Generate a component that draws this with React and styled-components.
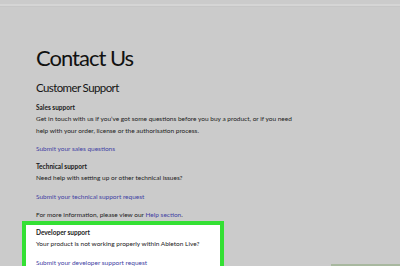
import React from "react";
import styled, { createGlobalStyle } from "styled-components";

const Global = createGlobalStyle`
  html, body { margin: 0; padding: 0; }
  body {
    width: 400px;
    height: 266px;
    overflow: hidden;
    background: #cbcbcb;
    font-family: Lato, "Open Sans", sans-serif;
    color: #141414;
  }
`;

const Page = styled.div`
  position: relative;
  width: 400px;
  height: 266px;
  overflow: hidden;
  background: #cbcbcb;
`;

const TopRule = styled.div`
  margin-top: 4px;
  height: 2px;
  background: #d5d5d5;
  border-bottom: 1px solid #c6c6c6;
`;

const Content = styled.div`
  padding: 0 0 0 36px;
`;

const Title = styled.h1`
  margin: 38px 0 0;
  font-size: 22px;
  line-height: 26px;
  font-weight: 400;
  letter-spacing: -1px;
  color: #111;
`;

const SubTitle = styled.h2`
  margin: 10px 0 0;
  font-size: 11.5px;
  line-height: 14px;
  font-weight: 400;
  letter-spacing: -0.6px;
  color: #151515;
`;

const Block = styled.div`
  margin-top: ${(p) => p.$top || 8}px;
`;

const Label = styled.div`
  font-size: 6.5px;
  line-height: 11px;
  font-weight: 700;
  color: #1a1a1a;
`;

const Text = styled.div`
  font-size: 6.5px;
  line-height: 11.5px;
  color: #222;
  white-space: nowrap;
`;

const Link = styled.a`
  display: block;
  margin-top: ${(p) => p.$top || 7}px;
  font-size: 6.5px;
  line-height: 11px;
  color: #4343a4;
  text-decoration: none;
  white-space: nowrap;
`;

const Inline = styled.span`
  color: #4343a4;
`;

const Highlight = styled.div`
  margin: 1px 0 0 -14px;
  width: 184px;
  height: 60px;
  border: 4px solid #34e034;
  border-bottom: none;
  background: #ffffff;
  padding: 1.5px 0 0 10px;
  box-sizing: content-box;
`;

const Strip = styled.div`
  position: absolute;
  right: 0;
  bottom: 0;
  width: 69px;
  height: 2px;
  background: #a8b89f;
`;

export default function App() {
  return (
    <Page>
      <Global />
      <TopRule />
      <Content>
        <Title>Contact Us</Title>
        <SubTitle>Customer Support</SubTitle>
        <Block $top={7}>
          <Label>Sales support</Label>
          <Text>
            Get in touch with us if you’ve got some questions before you buy a product, or if you need
          </Text>
          <Text>help with your order, license or the authorisation process.</Text>
          <Link href="#">Submit your sales questions</Link>
        </Block>
        <Block $top={7}>
          <Label>Technical support</Label>
          <Text>Need help with setting up or other technical issues?</Text>
          <Link href="#">Submit your technical support request</Link>
        </Block>
        <Block $top={7}>
          <Text>
            For more information, please view our <Inline>Help section</Inline>.
          </Text>
        </Block>
        <Highlight>
          <Label>Developer support</Label>
          <Text>Your product is not working properly within Ableton Live?</Text>
          <Link href="#" $top={7.5}>Submit your developer support request</Link>
        </Highlight>
      </Content>
      <Strip />
    </Page>
  );
}
